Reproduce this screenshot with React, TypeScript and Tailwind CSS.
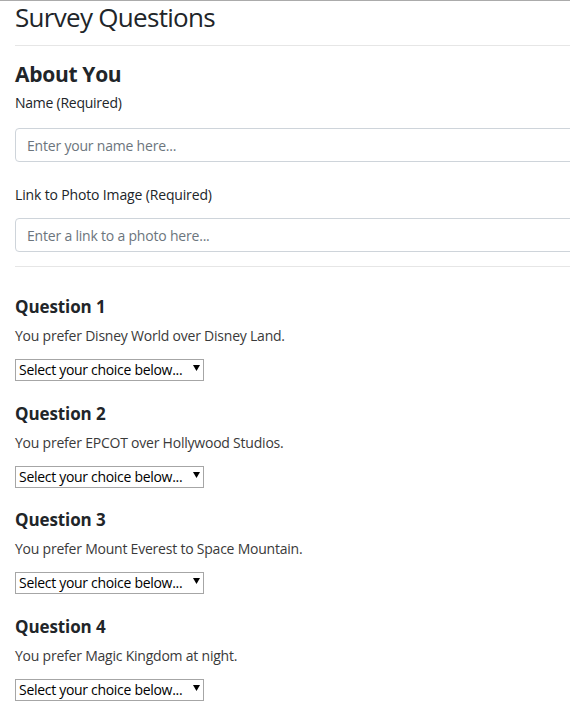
import React from "react";

const font = { fontFamily: '"Open Sans", "Noto Sans", sans-serif' };

function Question({ n, text }: { n: number; text: string }) {
  return (
    <div className="pt-[26px] h-[106.5px]">
      <h5 className="text-[17px] leading-[24px] font-bold text-[#212529] m-0 tracking-[-0.1px]">Question {n}</h5>
      <p className="text-[14px] leading-[21px] text-[#3a3a3a] mt-[6px] tracking-[-0.22px]">{text}</p>
      <div className="relative mt-[11px] w-[189px] h-[22px]">
        <select
          defaultValue=""
          className="appearance-none w-[189px] h-[22px] border border-[#a6a6a6] bg-white text-[14px] leading-[20px] text-black pl-[3px] pr-[14px] rounded-none outline-none tracking-[-0.3px]"
          style={font}
        >
          <option value="">Select your choice below...</option>
          <option value="1">Strongly Disagree</option>
        </select>
        <svg className="absolute right-[4px] top-[8px] pointer-events-none" width="7" height="6" viewBox="0 0 7 6">
          <path d="M0 0 H7 L3.5 6 Z" fill="#000" />
        </svg>
      </div>
    </div>
  );
}

export default function App() {
  return (
    <div className="w-[570px] min-h-[725px] overflow-hidden bg-white border-t border-[#ababab]" style={font}>
      <div className="w-[640px] pl-[15px]">
        <h3 className="text-[26px] leading-[34px] font-normal text-[#212529] mt-[-1px] tracking-[-0.7px]">Survey Questions</h3>
        <hr className="border-0 border-t border-[#e6e6e6] mt-[11px]" />
        <h4 className="text-[21px] leading-[28px] font-bold text-[#212529] mt-[14px] tracking-[-0.3px]">About You</h4>
        <label className="block text-[14px] leading-[21px] text-[#212529] mt-[4px] tracking-[-0.25px]">Name (Required)</label>
        <input
          placeholder="Enter your name here..."
          className="block w-full h-[34px] mt-[15px] border border-[#ced4da] rounded-[4px] px-[11px] text-[14px] placeholder:text-[#6c757d] outline-none tracking-[-0.2px]"
          style={font}
        />
        <label className="block text-[14px] leading-[21px] text-[#212529] mt-[22px] tracking-[-0.15px]">Link to Photo Image (Required)</label>
        <input
          placeholder="Enter a link to a photo here..."
          className="block w-full h-[34px] mt-[13px] border border-[#ced4da] rounded-[4px] px-[11px] text-[14px] placeholder:text-[#6c757d] outline-none tracking-[-0.2px]"
          style={font}
        />
        <hr className="border-0 border-t border-[#e6e6e6] mt-[14px]" />
        <div className="mt-[2px]">
          <Question n={1} text="You prefer Disney World over Disney Land." />
          <Question n={2} text="You prefer EPCOT over Hollywood Studios." />
          <Question n={3} text="You prefer Mount Everest to Space Mountain." />
          <Question n={4} text="You prefer Magic Kingdom at night." />
        </div>
      </div>
    </div>
  );
}
